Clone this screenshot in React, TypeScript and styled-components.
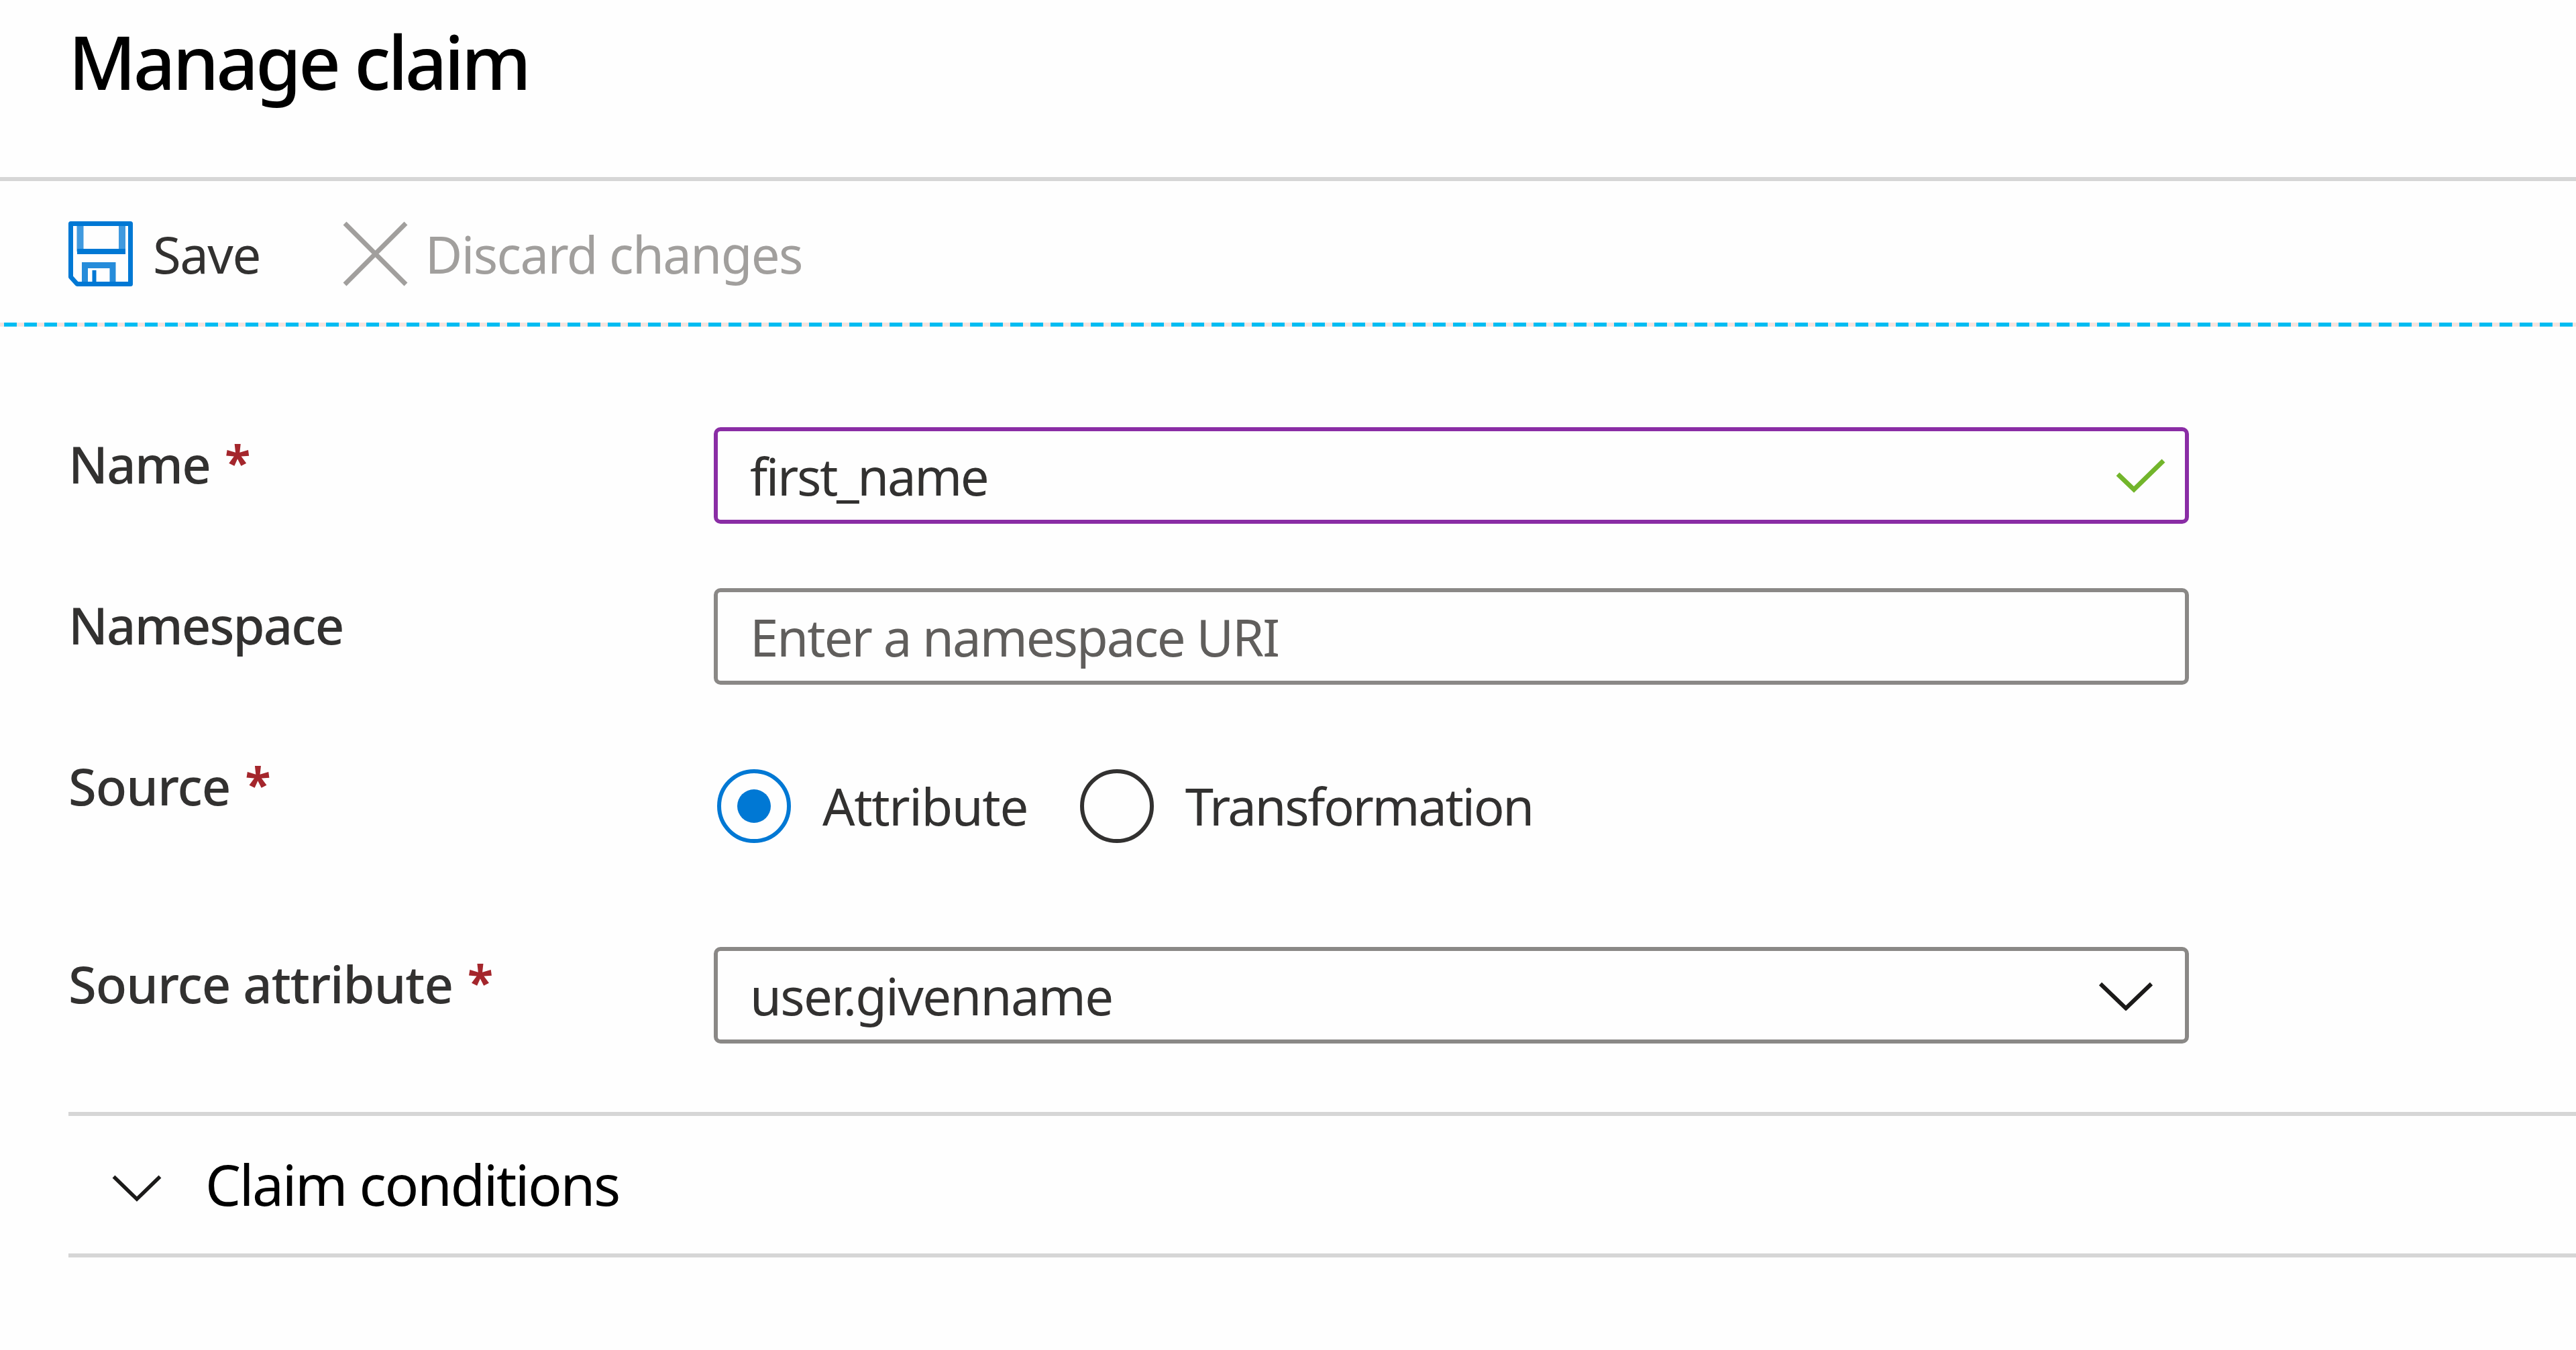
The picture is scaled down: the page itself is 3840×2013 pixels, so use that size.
import { FC, ReactNode } from 'react'
import styled, { createGlobalStyle } from 'styled-components'

const GlobalStyle = createGlobalStyle`
  * {
    box-sizing: border-box;
  }

  body {
    margin: 0;
    background: #fefefe;
    color: #323130;
    font-family: 'Noto Sans', 'Open Sans', sans-serif;
    font-size: 76px;
    line-height: 96px;
    overflow: hidden;
  }
`

const Page = styled.main`
  display: flex;
  flex-direction: column;
  width: 100%;
  height: 2013px;
`

const Header = styled.header`
  height: 270px;
  padding: 31px 0 0 102px;
  border-bottom: 6px solid #d6d6d6;
`

const Title = styled.h1`
  margin: 0;
  color: #000;
  font-size: 110px;
  font-weight: 500;
  line-height: 120px;
  white-space: nowrap;
`

// letter spacing in px, the interface font is a bit tighter than Noto Sans
const Text = styled.span<{ $spacing?: number }>`
  letter-spacing: ${({ $spacing = -1.6 }) => $spacing}px;
  white-space: nowrap;
`

const Toolbar = styled.div`
  display: flex;
  align-items: center;
  gap: 123px;
  height: 211px;
  padding: 6px 0 0 102px;
`

const ToolbarButton = styled.div<{ $disabled?: boolean }>`
  display: flex;
  align-items: center;
  gap: ${({ $disabled }) => ($disabled ? 26 : 30)}px;
  color: ${({ $disabled }) => ($disabled ? '#a19f9d' : '#323130')};
`

const DashedLine = styled.div`
  height: 6px;
  background: repeating-linear-gradient(90deg, #f6e4df 0 6px, #00bcf2 6px 25px, #f6e4df 25px 30px);
`

const Form = styled.section`
  display: flex;
  flex-direction: column;
  gap: 96px;
  padding: 150px 0 0 102px;
`

const FormRow = styled.div<{ $tall?: boolean }>`
  display: grid;
  grid-template-columns: 962px 2199px;
  align-items: start;
  height: ${({ $tall }) => ($tall ? 199 : 144)}px;
`

const Label = styled.div`
  display: flex;
  gap: 22px;
  padding-top: 7px;
  font-weight: 500;
`

const Required = styled.span`
  color: #a4262c;
  font-size: 70px;
  font-weight: 700;
  line-height: 88px;
`

const Field = styled.div<{ $valid?: boolean; $placeholder?: boolean }>`
  display: flex;
  align-items: center;
  justify-content: space-between;
  height: 144px;
  padding: 2px ${({ $valid }) => ($valid ? 29 : 47)}px 0 48px;
  border: 6px solid ${({ $valid }) => ($valid ? '#8a2da5' : '#8a8886')};
  border-radius: 10px;
  color: ${({ $placeholder }) => ($placeholder ? '#605e5c' : '#323130')};
`

const RadioGroup = styled.div`
  display: flex;
  gap: 78px;
  padding: 30px 0 0 5px;
`

const RadioOption = styled.div`
  display: flex;
  align-items: center;
  gap: 47px;
  height: 110px;
`

const RadioMark = styled.span<{ $checked?: boolean }>`
  display: flex;
  align-items: center;
  justify-content: center;
  width: 110px;
  height: 110px;
  border: 6px solid ${({ $checked }) => ($checked ? '#0078d4' : '#323130')};
  border-radius: 50%;
`

const RadioDot = styled.span`
  width: 50px;
  height: 50px;
  border-radius: 50%;
  background: #0078d4;
`

const Conditions = styled.section`
  display: flex;
  align-items: center;
  gap: 65px;
  height: 217px;
  margin: 102px 0 0 102px;
  padding: 0 0 2px 65px;
  border-top: 6px solid #d6d6d6;
  border-bottom: 6px solid #d6d6d6;
  color: #000;
  font-size: 84px;
`

const ConditionsChevron = styled.svg`
  margin-top: 13px;
`

const SaveIcon = () => (
  <svg width="96" height="97" viewBox="0 0 96 97" fill="none" stroke="#0078d4">
    <path d="M17.5 5V45M80 5V45" strokeWidth="10" strokeOpacity=".75" />
    <path d="M13 45H85" strokeWidth="8" />
    <path d="M24.5 92V65.5H66V92" strokeWidth="9" strokeOpacity=".85" />
    <path d="M38.5 73V92" strokeWidth="6" />
    <path d="M3.5 3.5H92.5V93.5H13L3.5 83Z" strokeWidth="7" strokeLinejoin="round" />
  </svg>
)

const DiscardIcon = () => (
  <svg width="97" height="97" viewBox="0 0 97 97" fill="none" stroke="#a19f9d">
    <path d="M3 3L94 94M94 3L3 94" strokeWidth="7" />
  </svg>
)

const CheckIcon = () => (
  <svg width="74" height="52" viewBox="0 0 74 52" fill="none" stroke="#72b52b">
    <path d="M3 23L27 46L71 3" strokeWidth="7" />
  </svg>
)

const SelectChevron = () => (
  <svg width="82" height="44" viewBox="0 0 82 44" fill="none" stroke="#1b1a19">
    <path d="M3 4L41 40.5L79 4" strokeWidth="6" />
  </svg>
)

interface IFormItem {
  label: string
  spacing?: number
  required?: boolean
  tall?: boolean
  children: ReactNode
}

const FormItem: FC<IFormItem> = ({ label, spacing, required, tall, children }) => (
  <FormRow $tall={tall}>
    <Label>
      <Text $spacing={spacing}>{label}</Text>
      {required && <Required>*</Required>}
    </Label>
    {children}
  </FormRow>
)

const App: FC = () => {
  return (
    <>
      <GlobalStyle />
      <Page>
        <Header>
          <Title>
            <Text $spacing={-4.2}>Manage claim</Text>
          </Title>
        </Header>
        <Toolbar>
          <ToolbarButton>
            <SaveIcon />
            <Text $spacing={-1.5}>Save</Text>
          </ToolbarButton>
          <ToolbarButton $disabled>
            <DiscardIcon />
            <Text>Discard changes</Text>
          </ToolbarButton>
        </Toolbar>
        <DashedLine />
        <Form>
          <FormItem label="Name" spacing={-1.7} required>
            <Field $valid>
              <Text $spacing={-2.4}>first_name</Text>
              <CheckIcon />
            </Field>
          </FormItem>
          <FormItem label="Namespace" spacing={-1.9}>
            <Field $placeholder>
              <Text $spacing={-2}>Enter a namespace URI</Text>
            </Field>
          </FormItem>
          <FormItem label="Source" spacing={-1} required tall>
            <RadioGroup>
              <RadioOption>
                <RadioMark $checked>
                  <RadioDot />
                </RadioMark>
                <Text $spacing={-1.4}>Attribute</Text>
              </RadioOption>
              <RadioOption>
                <RadioMark />
                <Text $spacing={-2.4}>Transformation</Text>
              </RadioOption>
            </RadioGroup>
          </FormItem>
          <FormItem label="Source attribute" spacing={-1} required>
            <Field>
              <Text $spacing={-1.7}>user.givenname</Text>
              <SelectChevron />
            </Field>
          </FormItem>
        </Form>
        <Conditions>
          <ConditionsChevron width="74" height="40" viewBox="0 0 74 40" fill="none" stroke="#1b1a19">
            <path d="M2.5 2.5L37 36L71.5 2.5" strokeWidth="5.5" />
          </ConditionsChevron>
          <Text $spacing={-2.4}>Claim conditions</Text>
        </Conditions>
      </Page>
    </>
  )
}

export default App
